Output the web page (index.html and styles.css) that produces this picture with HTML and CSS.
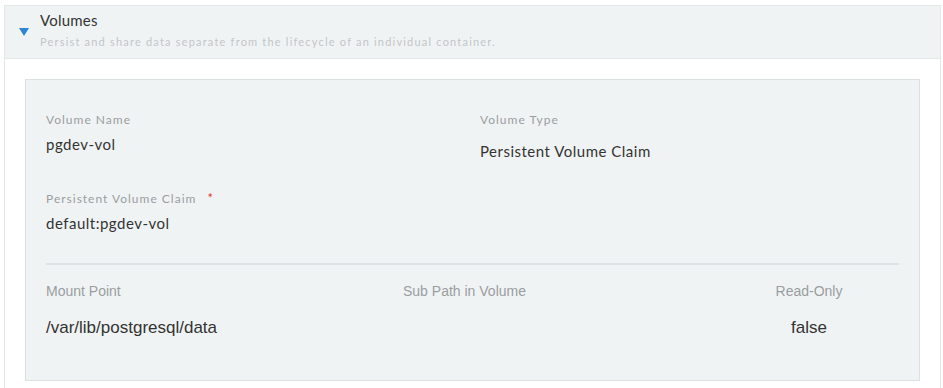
FILE: index.html
```html
<!DOCTYPE html>
<html lang="en">
<head>
  <meta charset="UTF-8" />
  <title>Volumes</title>
  <link rel="stylesheet" href="styles.css">
</head>
<body>

  <!-- Volumes accordion -->
  <div class="accordion">
    <div class="accordion-header">
      <span class="caret"></span>
      <div class="header-text">
        <div class="title">Volumes</div>
        <div class="subtitle">Persist and share data separate from the lifecycle of an individual container.</div>
      </div>
    </div>

    <div class="accordion-body">
      <div class="volume-panel">
        <div class="row-two">
          <div class="field">
            <div class="label">Volume Name</div>
            <div class="value">pgdev-vol</div>
          </div>
          <div class="field">
            <div class="label">Volume Type</div>
            <div class="value value-select">Persistent Volume Claim</div>
          </div>
        </div>

        <div class="field field-claim">
          <div class="label">Persistent Volume Claim <span class="required">*</span></div>
          <div class="value">default:pgdev-vol</div>
        </div>

        <hr class="divider">

        <div class="mount-row">
          <div class="mount-col">
            <div class="mount-label">Mount Point</div>
            <div class="mount-value">/var/lib/postgresql/data</div>
          </div>
          <div class="mount-col">
            <div class="mount-label">Sub Path in Volume</div>
            <div class="mount-value"></div>
          </div>
          <div class="mount-col centered">
            <div class="mount-label">Read-Only</div>
            <div class="mount-value">false</div>
          </div>
        </div>
      </div>
    </div>
  </div>

</body>
</html>
```

FILE: styles.css
```css
body {
  font-family: Lato, 'Open Sans', sans-serif;
  margin: 0;
  padding: 5px 0 0 4px;
  background-color: #fff;
  color: #333;
}

.accordion {
  width: 937px;
  box-sizing: border-box;
}

.accordion-header {
  display: flex;
  background-color: #f0f3f4;
  border: 1px solid #e2e7e8;
  height: 54px;
  box-sizing: border-box;
  padding: 4px 0 0 14px;
}

.caret {
  width: 0;
  height: 0;
  border-left: 5px solid transparent;
  border-right: 5px solid transparent;
  border-top: 8px solid #2b86d6;
  margin-top: 18px;
  margin-right: 11px;
}

.title {
  font-size: 15px;
  line-height: 20px;
  letter-spacing: 0.2px;
  color: #333;
}

.subtitle {
  font-size: 11px;
  line-height: 14px;
  letter-spacing: 1.2px;
  color: #c2c6c8;
  margin-top: 5px;
}

.accordion-body {
  border-left: 1px solid #e2e7e8;
  border-right: 1px solid #e2e7e8;
  padding: 20px 20px 20px 20px;
  height: 360px;
}

.volume-panel {
  background-color: #f0f3f4;
  border: 1px solid #dbe1e3;
  padding: 32px 20px 0 20px;
  height: 302px;
  box-sizing: border-box;
}

.row-two {
  display: grid;
  grid-template-columns: 1fr 1fr;
  column-gap: 15px;
}

.label {
  font-size: 12px;
  line-height: 16px;
  letter-spacing: 1px;
  color: #9a9ea0;
}

.required {
  color: #e53935;
  margin-left: 7px;
  font-size: 13px;
}

.value {
  font-size: 15px;
  line-height: 20px;
  letter-spacing: 0.5px;
  color: #333;
  margin-top: 6px;
}

.value-select {
  margin-top: 13px;
}

.field-claim {
  margin-top: 29px;
}

.divider {
  border: none;
  height: 2px;
  background-color: #dde2e4;
  margin: 30px 0 0 0;
}

.mount-row {
  display: grid;
  grid-template-columns: 357px 1fr 180px;
  margin-top: 18px;
  font-family: 'Liberation Sans', Arial, sans-serif;
}

.mount-col.centered {
  text-align: center;
}

.mount-label {
  font-size: 14px;
  line-height: 16px;
  color: #9a9ea0;
}

.mount-value {
  font-size: 17px;
  line-height: 20px;
  color: #333;
  margin-top: 19px;
  min-height: 20px;
}
```
